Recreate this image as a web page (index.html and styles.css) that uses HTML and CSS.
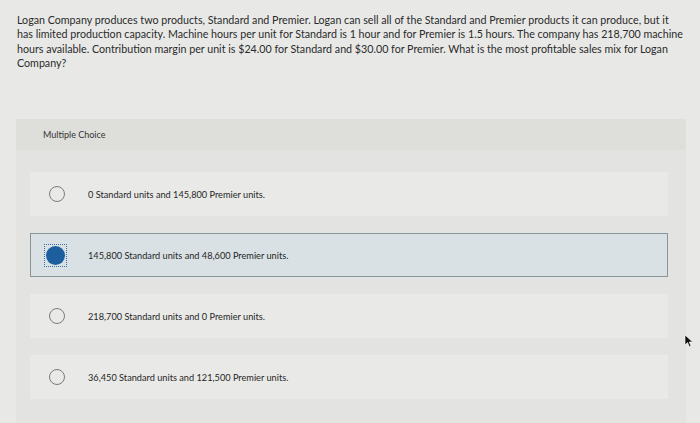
FILE: index.html
```html
<!DOCTYPE html>
<html>
<head>
<meta charset="utf-8">
<link rel="stylesheet" href="styles.css">
</head>
<body>
<div class="page">
  <p class="question">Logan Company produces two products, Standard and Premier. Logan can sell all of the Standard and Premier products it can produce, but it<br>has limited production capacity. Machine hours per unit for Standard is 1 hour and for Premier is 1.5 hours. The company has 218,700 machine<br>hours available. Contribution margin per unit is $24.00 for Standard and $30.00 for Premier. What is the most profitable sales mix for Logan<br>Company?</p>
  <div class="panel">
    <div class="panel-head">Multiple Choice</div>
    <div class="options">
      <div class="option">
        <span class="radio"></span>
        <span class="label">0 Standard units and 145,800 Premier units.</span>
      </div>
      <div class="option selected">
        <span class="focus"><span class="radio filled"></span></span>
        <span class="label">145,800 Standard units and 48,600 Premier units.</span>
      </div>
      <div class="option">
        <span class="radio"></span>
        <span class="label">218,700 Standard units and 0 Premier units.</span>
      </div>
      <div class="option">
        <span class="radio"></span>
        <span class="label">36,450 Standard units and 121,500 Premier units.</span>
      </div>
    </div>
  </div>
  <svg class="cursor" width="10" height="14" viewBox="0 0 10 14"><path d="M1 1 L1 11 L3.5 8.6 L5.4 12.8 L7 12.1 L5.2 8 L8.6 8 Z" fill="#111" stroke="#fff" stroke-width="0.6"/></svg>
</div>
</body>
</html>
```
FILE: styles.css
```css
html, body {
  margin: 0;
  padding: 0;
  background: #e8e9e6;
}
.page {
  position: relative;
  width: 700px;
  height: 423px;
  overflow: hidden;
  font-family: Lato, "Open Sans", sans-serif;
  color: #2b2b2b;
}
.question {
  margin: 0;
  padding: 13px 0 0 17px;
  width: 680px;
  height: 57px;
  font-size: 10.7px;
  line-height: 14.3px;
  color: #2a2a2a;
  white-space: nowrap;
}
.panel {
  margin: 49px 0 0 16px;
  width: 670px;
  height: 320px;
  background: #e3e4e1;
}
.panel-head {
  height: 31px;
  padding-left: 27px;
  display: flex;
  align-items: center;
  font-size: 9px;
  color: #333;
  background: #dedfdb;
}
.options {
  padding: 22px 18px 0 14px;
  display: flex;
  flex-direction: column;
  gap: 17px;
}
.option {
  height: 44px;
  display: flex;
  align-items: center;
  background: #e9eae7;
  box-sizing: border-box;
  padding-left: 19px;
}
.option.selected {
  background: #d9e1e4;
  border: 1px solid #8a9396;
  padding-left: 13px;
}
.radio {
  width: 16px;
  height: 16px;
  border: 1px solid #7a7c7e;
  border-radius: 50%;
  box-sizing: border-box;
  flex: none;
}
.focus {
  width: 23px;
  height: 23px;
  border: 1px dotted #3a6fa8;
  box-sizing: border-box;
  display: flex;
  align-items: center;
  justify-content: center;
  flex: none;
}
.radio.filled {
  width: 19px;
  height: 19px;
  border: none;
  background: #1d5e9e;
}
.label {
  margin-left: 23px;
  font-size: 9.2px;
  color: #262626;
}
.option.selected .label {
  margin-left: 21px;
}
.cursor {
  position: absolute;
  left: 684px;
  top: 334px;
}
```
